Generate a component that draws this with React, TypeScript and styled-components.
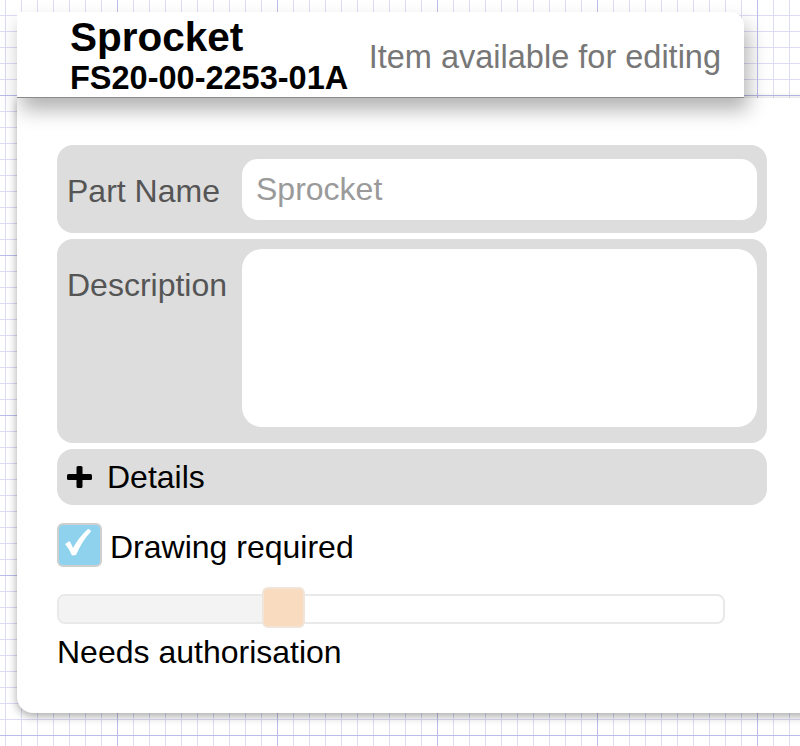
import React from 'react';
import styled, { createGlobalStyle } from 'styled-components';

const GlobalStyle = createGlobalStyle`
  * {
    box-sizing: border-box;
  }

  html, body {
    margin: 0;
    padding: 0;
    height: 746px;
    overflow: hidden;
  }

  body {
    font-family: "Liberation Sans", Arial, Helvetica, sans-serif;
    background-color: #ffffff;
    background-image:
      linear-gradient(to right, #bcbcea 1px, transparent 1px),
      linear-gradient(to bottom, #bcbcea 1px, transparent 1px),
      linear-gradient(to right, #dcdcf5 1px, transparent 1px),
      linear-gradient(to bottom, #dcdcf5 1px, transparent 1px);
    background-size: 160px 160px, 160px 160px, 16px 16px, 16px 16px;
    background-position: 117px 95px;
  }
`;

const Page = styled.main`
  padding: 12px 0 0 17px;
  width: 820px;
`;

const Header = styled.header`
  position: relative;
  z-index: 2;
  width: 727px;
  height: 86px;
  padding: 3px 23px 0 53px;
  display: flex;
  align-items: center;
  justify-content: space-between;
  background: #ffffff;
  border-bottom: 1px solid #8a8a8a;
  border-top-right-radius: 14px;
  box-shadow: 4px 12px 20px rgba(0, 0, 0, 0.3);
`;

const TitleBlock = styled.div`
  display: flex;
  flex-direction: column;
  align-self: flex-start;
`;

const Title = styled.h1`
  margin: 0;
  font-size: 40.5px;
  line-height: 44px;
  font-weight: 700;
  color: #000;
`;

const PartNumber = styled.div`
  margin-top: 1px;
  font-size: 32.5px;
  line-height: 36px;
  font-weight: 700;
  color: #000;
`;

const Status = styled.div`
  font-size: 32.5px;
  line-height: 37px;
  color: #777777;
  padding-top: 3px;
`;

const Card = styled.section`
  position: relative;
  z-index: 1;
  width: 800px;
  padding: 47px 0 42px 40px;
  background: #ffffff;
  border-bottom-left-radius: 16px;
  box-shadow: 0 3px 10px rgba(0, 0, 0, 0.35);
`;

const Fields = styled.div`
  display: flex;
  flex-direction: column;
  gap: 6px;
  width: 710px;
`;

const FieldRow = styled.div`
  display: flex;
  align-items: flex-start;
  padding: 10px;
  background: #dddddd;
  border-radius: 16px;
`;

const Label = styled.label`
  flex: 0 0 175px;
  margin-top: 18px;
  font-size: 32px;
  line-height: 37px;
  color: #555555;
`;

const TextInput = styled.input`
  flex: 1;
  height: 61px;
  margin: 4px 0 3px;
  padding: 0 14px;
  border: none;
  border-radius: 16px;
  background: #ffffff;
  font-family: inherit;
  font-size: 32px;
  color: #222;
  outline: none;

  &::placeholder {
    color: #9a9a9a;
  }
`;

const TextArea = styled.textarea`
  flex: 1;
  height: 178px;
  margin: 0 0 6px;
  border: none;
  border-radius: 20px;
  background: #ffffff;
  resize: none;
  outline: none;
  font-family: inherit;
  font-size: 32px;
`;

const DetailsRow = styled.div`
  display: flex;
  align-items: center;
  gap: 15px;
  height: 56px;
  padding: 0 10px;
  background: #dddddd;
  border-radius: 16px;
  font-size: 32px;
  color: #000;
`;

const CheckRow = styled.label`
  display: flex;
  align-items: center;
  gap: 8px;
  margin-top: 18px;
  font-size: 32px;
  line-height: 37px;
  color: #000;
`;

const CheckText = styled.span`
  padding-top: 4px;
`;

const CheckBox = styled.span`
  display: flex;
  width: 45px;
  height: 44px;
  background: #8fd2ee;
  border: 2px solid #cfcfcf;
  border-radius: 6px;
`;

const SliderWrap = styled.div`
  display: flex;
  align-items: center;
  width: 668px;
  height: 41px;
  margin-top: 20px;
`;

const Track = styled.div`
  position: relative;
  display: flex;
  width: 100%;
  height: 30px;
  margin-top: 3px;
  border: 2px solid #e9e9e9;
  border-radius: 8px;
  background: #ffffff;
`;

const TrackFill = styled.div`
  background: #f3f3f3;
  border-radius: 6px 0 0 6px;
`;

const Thumb = styled.div`
  position: absolute;
  top: -9px;
  width: 43px;
  height: 41px;
  background: #f9dcc0;
  border: 2px solid #f1e4d8;
  border-radius: 6px;
`;

const SliderLabel = styled.div`
  margin-top: 6px;
  font-size: 32px;
  line-height: 37px;
  color: #000;
`;

const PlusIcon = () => (
  <svg width="25" height="22" viewBox="0 0 25 22" aria-hidden="true">
    <rect x="9.5" y="0" width="6" height="22" rx="1.5" fill="#000" />
    <rect x="0" y="8" width="25" height="6" rx="1.5" fill="#000" />
  </svg>
);

const CheckMark = () => (
  <svg width="41" height="40" viewBox="0 0 41 40" aria-hidden="true">
    <path
      d="M6 19 L10.5 16 Q12.5 19 14 23 Q20 12 29 4 Q31.5 4 32 6.5 Q23 16 17 30 L13 30.5 Q10.5 24 6 19 Z"
      fill="#ffffff"
    />
  </svg>
);

const Slider = ({ value }: { value: number }) => {
  const left = Math.round(value * (668 - 4 - 43));
  return (
    <SliderWrap>
      <Track>
        <TrackFill style={{ width: left }} />
        <Thumb style={{ left: left - 2 }} />
      </Track>
    </SliderWrap>
  );
};

export const App = () => {
  return (
    <>
      <GlobalStyle />
      <Page>
        <Header>
          <TitleBlock>
            <Title>Sprocket</Title>
            <PartNumber>FS20-00-2253-01A</PartNumber>
          </TitleBlock>
          <Status>Item available for editing</Status>
        </Header>

        <Card>
          <Fields>
            <FieldRow>
              <Label>Part Name</Label>
              <TextInput placeholder="Sprocket" />
            </FieldRow>
            <FieldRow>
              <Label>Description</Label>
              <TextArea />
            </FieldRow>
            <DetailsRow>
              <PlusIcon />
              Details
            </DetailsRow>
          </Fields>

          <CheckRow>
            <CheckBox>
              <CheckMark />
            </CheckBox>
            <CheckText>Drawing required</CheckText>
          </CheckRow>

          <Slider value={0.33} />
          <SliderLabel>Needs authorisation</SliderLabel>
        </Card>
      </Page>
    </>
  );
};

export default App;
